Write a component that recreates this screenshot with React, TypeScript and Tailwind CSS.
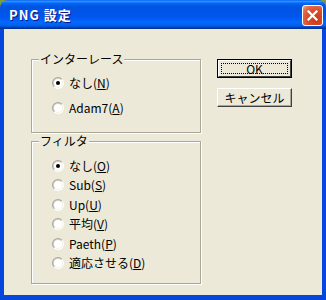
const font = { fontFamily: '"Noto Sans CJK JP", "Noto Sans", sans-serif' };

function Radio({ checked }: { checked?: boolean }) {
  return (
    <div className="w-[12px] h-[12px] rounded-full bg-[linear-gradient(135deg,#aca899_45%,#ffffff_55%)] flex items-center justify-center shrink-0">
      <div className="w-[10px] h-[10px] rounded-full bg-[linear-gradient(135deg,#d4d0c8_45%,#f1efe2_55%)] flex items-center justify-center">
        <div className="w-[8px] h-[8px] rounded-full bg-white flex items-center justify-center">
          {checked && <div className="w-[4px] h-[4px] rounded-full bg-black" />}
        </div>
      </div>
    </div>
  );
}

type Option = { label: string; key: string; checked?: boolean };

function Row({ opt, h }: { opt: Option; h: string }) {
  return (
    <div className={`flex items-center gap-[5px] ${h}`}>
      <Radio checked={opt.checked} />
      <span className="text-[12px] leading-[12px] text-black whitespace-nowrap">
        {opt.label}(<span className="underline underline-offset-[1px]">{opt.key}</span>)
      </span>
    </div>
  );
}

const interlace: Option[] = [
  { label: 'なし', key: 'N', checked: true },
  { label: 'Adam7', key: 'A' },
];

const filters: Option[] = [
  { label: 'なし', key: 'O', checked: true },
  { label: 'Sub', key: 'S' },
  { label: 'Up', key: 'U' },
  { label: '平均', key: 'V' },
  { label: 'Paeth', key: 'P' },
  { label: '適応させる', key: 'D' },
];

function Button({ children, def }: { children: React.ReactNode; def?: boolean }) {
  if (def) {
    return (
      <div className="w-[75px] h-[19px] border border-black">
        <div className="w-full h-full border border-t-white border-l-white border-r-[#404040] border-b-[#404040] bg-[#ece9d8] flex items-center justify-center p-[2px]">
          <div className="w-full h-full border border-dotted border-black flex items-center justify-center text-[12px] leading-[12px] text-black">
            {children}
          </div>
        </div>
      </div>
    );
  }
  return (
    <div className="w-[75px] h-[19px] border border-t-white border-l-white border-r-[#404040] border-b-[#404040] bg-[#ece9d8] shadow-[inset_-1px_-1px_0_#aca899] flex items-center justify-center text-[12px] leading-[12px] text-black">
      {children}
    </div>
  );
}

export default function App() {
  return (
    <div className="w-[326px] h-[300px] bg-[#7d9c3c]" style={font}>
      <div className="w-full h-full flex flex-col rounded-t-[8px] overflow-hidden">
        {/* Title bar */}
        <div className="h-[29px] shrink-0 flex items-start justify-between bg-[linear-gradient(to_bottom,#0058ee_0%,#3593ff_4%,#288eff_6%,#127dff_8%,#036ffc_10%,#0262ee_14%,#0057e5_20%,#0054e3_24%,#0055eb_56%,#005bf5_66%,#026afe_76%,#0062ef_86%,#0052d6_92%,#0040ab_94%,#003092_100%)]">
          <span className="ml-[9px] mt-[8px] text-[13px] leading-[14px] font-bold text-white tracking-[1px] [text-shadow:1px_1px_0_#0a1883]">
            PNG 設定
          </span>
          <div className="mt-[5px] mr-[3px] w-[21px] h-[21px] rounded-[3px] border border-white bg-[radial-gradient(circle_at_70%_70%,#c73a17_0%,#dd4f2b_50%,#e26a47_75%,#f0a58c_100%)] flex items-center justify-center">
            <svg width="11" height="11" viewBox="0 0 11 11">
              <path d="M1.5 1.5 L9.5 9.5 M9.5 1.5 L1.5 9.5" stroke="white" strokeWidth="2.2" strokeLinecap="square" />
            </svg>
          </div>
        </div>

        {/* Body */}
        <div className="flex-1 border-l-[4px] border-r-[4px] border-b-[5px] border-[#0746dd] bg-[#ece9d8] flex items-start pl-[27px] pt-[30px]">
          <div className="flex flex-col w-[170px]">
            <div className="h-[74px] border border-[#aca899] shadow-[inset_1px_1px_0_#ffffff,1px_1px_0_#ffffff] flex flex-col">
              <span className="-mt-[7px] ml-[7px] px-[1px] h-[12px] w-fit bg-[#ece9d8] text-[12px] leading-[12px] text-black">
                インターレース
              </span>
              <div className="mt-[8px] pl-[20px] flex flex-col gap-[5px]">
                {interlace.map((o) => (
                  <Row key={o.key} opt={o} h="h-[20px]" />
                ))}
              </div>
            </div>

            <div className="mt-[8px] h-[143px] border border-[#aca899] shadow-[inset_1px_1px_0_#ffffff,1px_1px_0_#ffffff] flex flex-col">
              <span className="-mt-[7px] ml-[7px] px-[1px] h-[12px] w-fit bg-[#ece9d8] text-[12px] leading-[12px] text-black">
                フィルタ
              </span>
              <div className="mt-[9px] pl-[20px] flex flex-col">
                {filters.map((o) => (
                  <Row key={o.key} opt={o} h="h-[19.5px]" />
                ))}
              </div>
            </div>
          </div>

          <div className="ml-[16px] flex flex-col gap-[10px]">
            <Button def>OK</Button>
            <Button>キャンセル</Button>
          </div>
        </div>
      </div>
    </div>
  );
}
